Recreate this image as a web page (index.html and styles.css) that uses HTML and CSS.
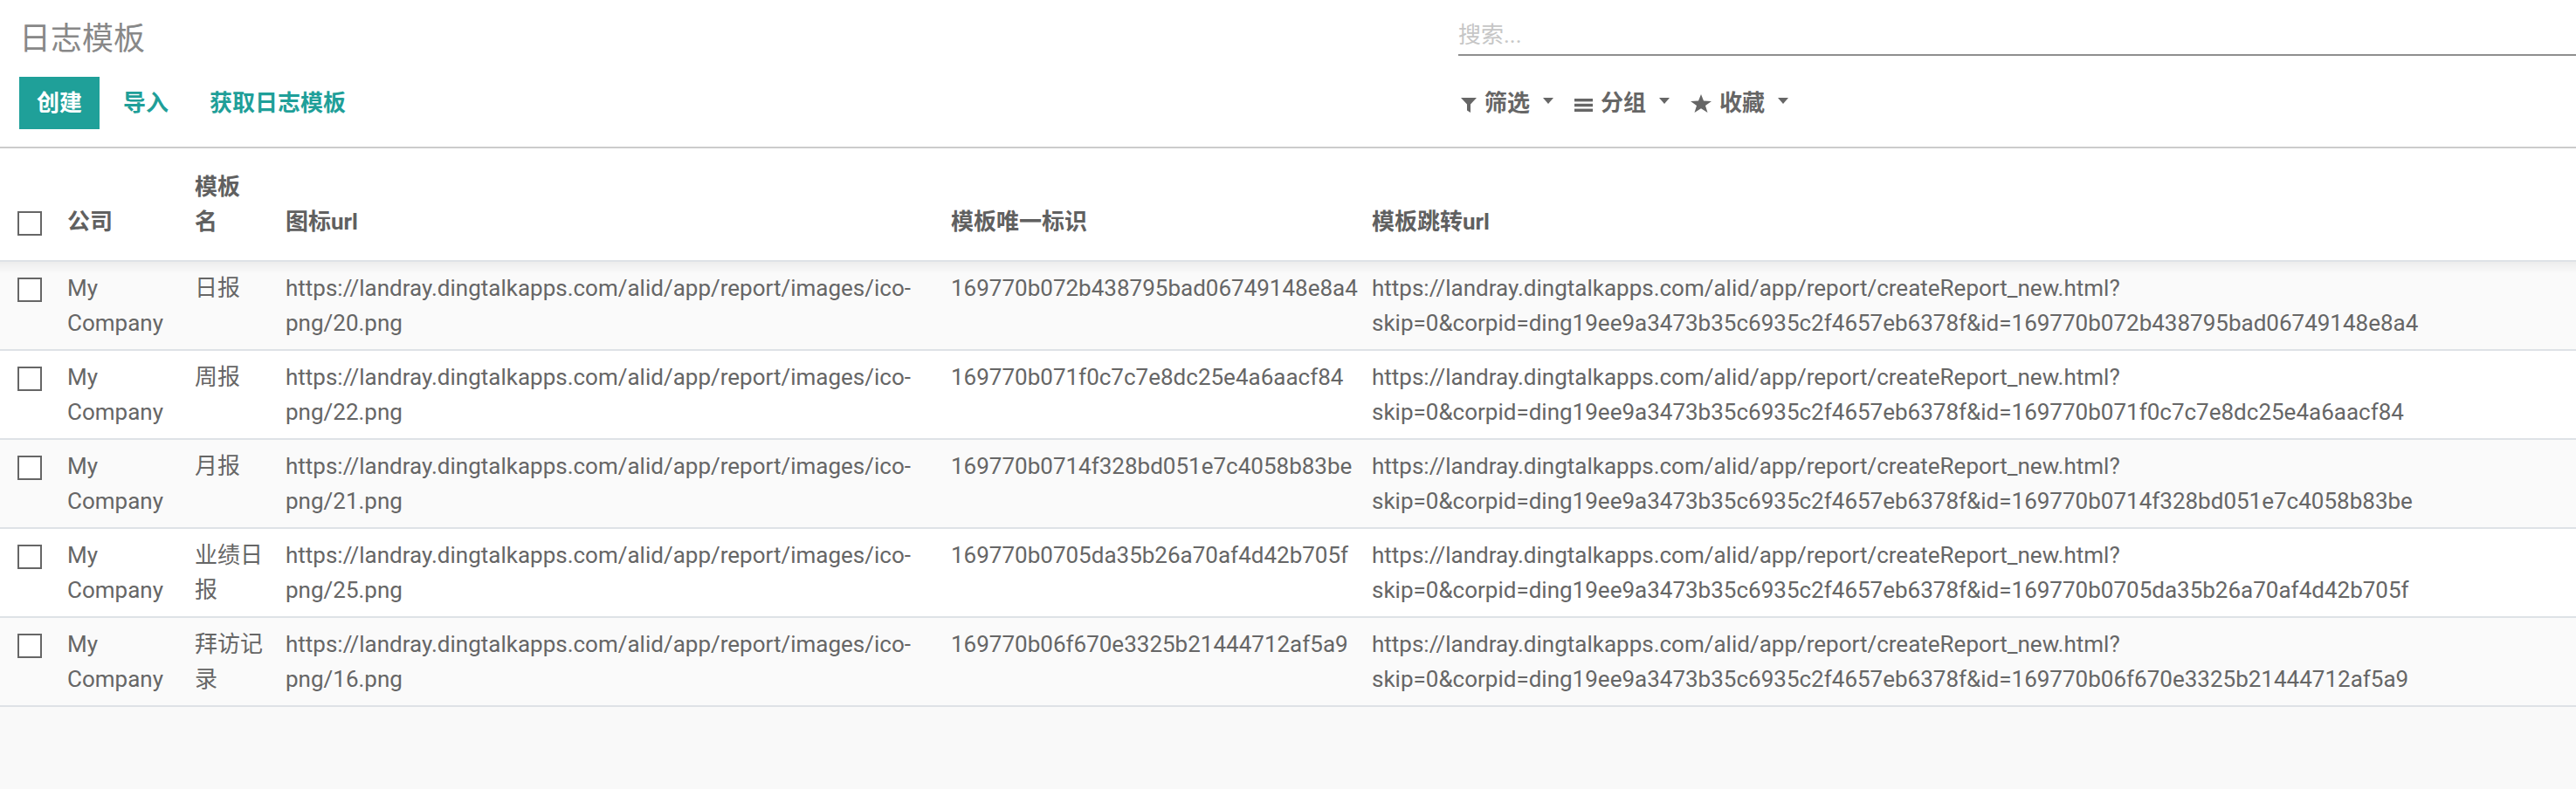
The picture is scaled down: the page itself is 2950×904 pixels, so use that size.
FILE: index.html
```html
<!DOCTYPE html>
<html lang="zh-CN">
<head>
<meta charset="utf-8">
<title>日志模板</title>
<link rel="stylesheet" href="styles.css">
</head>
<body>
<div class="control-panel">
  <div class="cp-left">
    <h1 class="breadcrumb">日志模板</h1>
    <div class="buttons">
      <button class="btn btn-primary">创建</button>
      <button class="btn btn-link">导入</button>
      <button class="btn btn-link">获取日志模板</button>
    </div>
  </div>
  <div class="cp-right">
    <div class="search">
      <input class="search-input" type="text" placeholder="搜索...">
    </div>
    <div class="filters">
      <button class="filter">
        <svg class="icon icon-filter" width="18" height="17" viewBox="0 0 18 17"><path d="M0 0H18L11 7.5V17L7 14.5V7.5Z"/></svg>
        <span>筛选</span><span class="caret"></span>
      </button>
      <button class="filter">
        <svg class="icon icon-bars" width="21" height="15" viewBox="0 0 21 15"><rect x="0" y="0" width="21" height="3.4"/><rect x="0" y="5.8" width="21" height="3.4"/><rect x="0" y="11.6" width="21" height="3.4"/></svg>
        <span>分组</span><span class="caret"></span>
      </button>
      <button class="filter">
        <svg class="icon icon-star" width="24" height="21" viewBox="0 0 24 22.5" preserveAspectRatio="none"><polygon points="12,0 15,8 24,8.5 17,14 19.5,22.5 12,17.5 4.5,22.5 7,14 0,8.5 9,8"/></svg>
        <span>收藏</span><span class="caret"></span>
      </button>
    </div>
  </div>
</div>
<div class="content">
  <table class="list">
    <colgroup>
      <col class="c-sel"><col class="c-company"><col class="c-name"><col class="c-icon"><col class="c-key"><col class="c-url">
    </colgroup>
    <thead>
      <tr>
        <th class="sel"><span class="check"></span></th>
        <th>公司</th>
        <th>模板名</th>
        <th>图标url</th>
        <th>模板唯一标识</th>
        <th>模板跳转url</th>
      </tr>
    </thead>
    <tbody>
      <tr>
        <td class="sel"><span class="check"></span></td>
        <td>My Company</td>
        <td>日报</td>
        <td>https://landray.dingtalkapps.com/alid/app/report/images/ico-png/20.png</td>
        <td>169770b072b438795bad06749148e8a4</td>
        <td>https://landray.dingtalkapps.com/alid/app/report/createReport_new.html?skip=0&amp;corpid=ding19ee9a3473b35c6935c2f4657eb6378f&amp;id=169770b072b438795bad06749148e8a4</td>
      </tr>
      <tr>
        <td class="sel"><span class="check"></span></td>
        <td>My Company</td>
        <td>周报</td>
        <td>https://landray.dingtalkapps.com/alid/app/report/images/ico-png/22.png</td>
        <td>169770b071f0c7c7e8dc25e4a6aacf84</td>
        <td>https://landray.dingtalkapps.com/alid/app/report/createReport_new.html?skip=0&amp;corpid=ding19ee9a3473b35c6935c2f4657eb6378f&amp;id=169770b071f0c7c7e8dc25e4a6aacf84</td>
      </tr>
      <tr>
        <td class="sel"><span class="check"></span></td>
        <td>My Company</td>
        <td>月报</td>
        <td>https://landray.dingtalkapps.com/alid/app/report/images/ico-png/21.png</td>
        <td>169770b0714f328bd051e7c4058b83be</td>
        <td>https://landray.dingtalkapps.com/alid/app/report/createReport_new.html?skip=0&amp;corpid=ding19ee9a3473b35c6935c2f4657eb6378f&amp;id=169770b0714f328bd051e7c4058b83be</td>
      </tr>
      <tr>
        <td class="sel"><span class="check"></span></td>
        <td>My Company</td>
        <td>业绩日报</td>
        <td>https://landray.dingtalkapps.com/alid/app/report/images/ico-png/25.png</td>
        <td>169770b0705da35b26a70af4d42b705f</td>
        <td>https://landray.dingtalkapps.com/alid/app/report/createReport_new.html?skip=0&amp;corpid=ding19ee9a3473b35c6935c2f4657eb6378f&amp;id=169770b0705da35b26a70af4d42b705f</td>
      </tr>
      <tr>
        <td class="sel"><span class="check"></span></td>
        <td>My Company</td>
        <td>拜访记录</td>
        <td>https://landray.dingtalkapps.com/alid/app/report/images/ico-png/16.png</td>
        <td>169770b06f670e3325b21444712af5a9</td>
        <td>https://landray.dingtalkapps.com/alid/app/report/createReport_new.html?skip=0&amp;corpid=ding19ee9a3473b35c6935c2f4657eb6378f&amp;id=169770b06f670e3325b21444712af5a9</td>
      </tr>
    </tbody>
  </table>
</div>
</body>
</html>
```
FILE: styles.css
```css
* { box-sizing: border-box; }
html, body { margin: 0; padding: 0; }
body {
  background: #f9f9f9;
  font-family: Roboto, "Noto Sans CJK SC", sans-serif;
  font-size: 26px;
  line-height: 40px;
  color: #666;
}

/* control panel */
.control-panel {
  display: grid;
  grid-template-columns: 1648px 1fr;
  height: 170px;
  padding: 18px 0 20px 22px;
  background: #fff;
  border-bottom: 2px solid #cccccc;
}
.cp-left, .cp-right {
  display: flex;
  flex-direction: column;
}
.cp-left { gap: 16px; }
.cp-right { gap: 24px; }
.breadcrumb {
  margin: 0;
  height: 54px;
  font-size: 36px;
  line-height: 54px;
  font-weight: 400;
  color: #888;
}
.buttons {
  display: flex;
  gap: 7px;
  height: 60px;
}
.btn {
  height: 60px;
  padding: 0 20px;
  border: 0;
  border-radius: 0;
  background: transparent;
  font-family: inherit;
  font-size: 26px;
  font-weight: 700;
  line-height: 40px;
  color: #1f9f99;
  cursor: pointer;
}
.btn-primary {
  background: #1fa099;
  color: #fff;
}

.search {
  height: 46px;
  border-bottom: 2px solid #8f8f8f;
}
.search-input {
  width: 100%;
  height: 44px;
  border: 0;
  outline: none;
  padding: 0;
  background: transparent;
  font-family: inherit;
  font-size: 26px;
  color: #666;
}
.search-input::placeholder { color: #c6c6c6; }

.filters {
  display: flex;
  align-items: center;
  gap: 24px;
  height: 60px;
  padding-left: 3px;
}
.filter {
  display: flex;
  align-items: center;
  padding: 0;
  border: 0;
  background: transparent;
  font-family: inherit;
  font-size: 26px;
  font-weight: 700;
  line-height: 40px;
  color: #666;
  cursor: pointer;
}
.icon {
  fill: #666;
  margin-right: 9px;
  flex: none;
}
.icon-filter { margin-top: 4px; }
.icon-bars { margin-top: 4px; }
.caret {
  width: 0;
  height: 0;
  margin-left: 15px;
  margin-bottom: 5px;
  border-left: 6.5px solid transparent;
  border-right: 6.5px solid transparent;
  border-top: 7px solid #666;
}

/* list */
.list {
  width: 100%;
  border-collapse: collapse;
  table-layout: fixed;
  background: #fff;
}
.c-sel { width: 68px; }
.c-company { width: 146px; }
.c-name { width: 104px; }
.c-icon { width: 762px; }
.c-key { width: 482px; }
.list th, .list td {
  padding: 10px 9px;
  border-bottom: 2px solid #dee2e6;
  text-align: left;
  vertical-align: top;
}
.list thead th {
  padding: 24px 30px 24px 9px;
  vertical-align: bottom;
  font-weight: 700;
  color: #606060;
}
.list th.sel, .list td.sel { padding-left: 20px; padding-right: 0; }
.list tbody tr:nth-child(odd) td { background-color: #fafafa; }
.list tbody tr:first-child td {
  background-image: linear-gradient(to bottom, rgba(0, 0, 0, 0.05), rgba(0, 0, 0, 0) 14px);
}
.check {
  display: inline-block;
  width: 28px;
  height: 28px;
  border: 2px solid #666;
  background: #fff;
  vertical-align: middle;
}
```
